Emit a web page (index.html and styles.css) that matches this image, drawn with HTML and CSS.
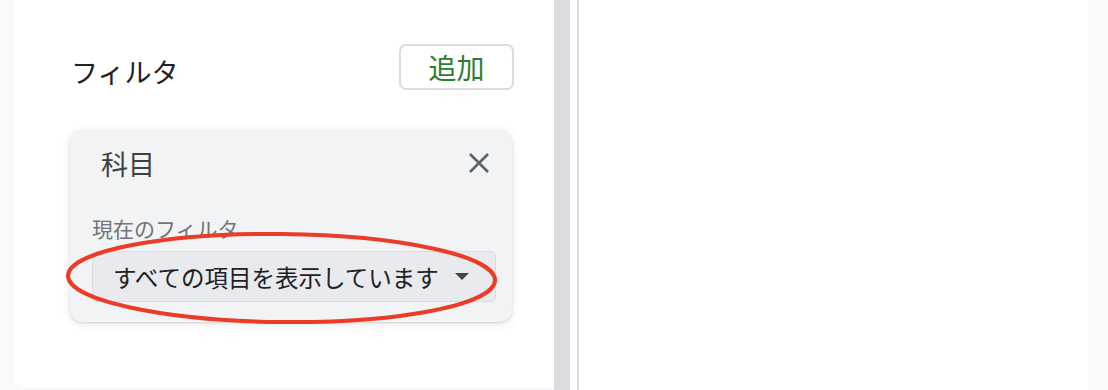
FILE: index.html
```html
<!DOCTYPE html>
<html lang="ja">
<head>
    <meta charset="UTF-8">
    <meta name="viewport" content="width=device-width, initial-scale=1.0">
    <title>フィルタ</title>
    <link rel="stylesheet" href="styles.css">
</head>
<body>
    <div class="page">
        <div class="sidePanel">
            <div class="panelHead">
                <h2 class="panelTitle">フィルタ</h2>
                <button class="addBtn">追加</button>
            </div>
            <div class="filterCard">
                <div class="cardHead">
                    <span class="cardTitle">科目</span>
                    <svg class="closeIcon" width="22" height="22" viewBox="0 0 22 22">
                        <path d="M2 2L20 20M20 2L2 20" stroke="#5f6368" stroke-width="2.6" fill="none"/>
                    </svg>
                </div>
                <div class="cardLabel">現在のフィルタ</div>
                <div class="select">
                    <span>すべての項目を表示しています</span>
                    <span class="caret"></span>
                </div>
                <svg class="mark" width="439" height="100" viewBox="0 0 439 100">
                    <ellipse cx="219.5" cy="50" rx="213.5" ry="44" fill="none" stroke="#ea3c26" stroke-width="4" transform="rotate(0.6 219.5 50)"/>
                </svg>
            </div>
        </div>
        <div class="splitter"></div>
        <div class="gap"></div>
        <div class="mainArea"></div>
    </div>
</body>
</html>
```

FILE: styles.css
```css
*{
    margin: 0;
    padding: 0;
    box-sizing: border-box;
}
body{
    background: #f8f9fa;
    font-family: "Noto Sans CJK JP", "Noto Sans", sans-serif;
    color: #202124;
}
.page{
    display: flex;
    height: 390px;
}
.sidePanel{
    width: 540px;
    height: 388px;
    margin-left: 14px;
    background: #fff;
    border-bottom-left-radius: 10px;
    padding: 44px 40px 0 56px;
}
.panelHead{
    display: flex;
    justify-content: space-between;
    align-items: flex-start;
}
.panelTitle{
    font-size: 27px;
    font-weight: 400;
    line-height: 36px;
    margin-top: 10px;
    padding-left: 1px;
}
.addBtn{
    width: 115px;
    height: 46px;
    background: #fff;
    border: 2px solid #dadce0;
    border-radius: 7px;
    color: #2e7d32;
    font-family: inherit;
    font-size: 28px;
    line-height: 1;
}
.filterCard{
    position: relative;
    margin: 40px 2px 0 0;
    height: 192px;
    background: #f1f3f4;
    border-radius: 12px;
    box-shadow: 0 1px 2px rgba(60,64,67,.15), 0 2px 8px rgba(60,64,67,.12);
    padding: 14px 16px 0 22px;
}
.cardHead{
    display: flex;
    justify-content: space-between;
    align-items: center;
    height: 38px;
}
.cardTitle{
    font-size: 27px;
    padding-left: 9px;
    color: #3c4043;
}
.closeIcon{
    margin-right: 6px;
}
.cardLabel{
    margin-top: 31px;
    font-size: 21px;
    line-height: 30px;
    color: #70757a;
}
.select{
    margin-top: 8px;
    height: 51px;
    background: #e8eaed;
    border: 1px solid #dadce0;
    border-radius: 5px;
    display: flex;
    align-items: center;
    justify-content: space-between;
    padding: 0 26px 0 20px;
    font-size: 23.5px;
    color: #202124;
}
.caret{
    width: 0;
    height: 0;
    border-left: 7px solid transparent;
    border-right: 7px solid transparent;
    border-top: 7px solid #444;
}
.mark{
    position: absolute;
    left: -8px;
    top: 98px;
}
.splitter{
    width: 16px;
    background: #dadce0;
}
.gap{
    background: #fff;
    border-right: 2px solid #dadce0;
    width: 9px;
}
.mainArea{
    width: 509px;
    background: #fff;
}
```
